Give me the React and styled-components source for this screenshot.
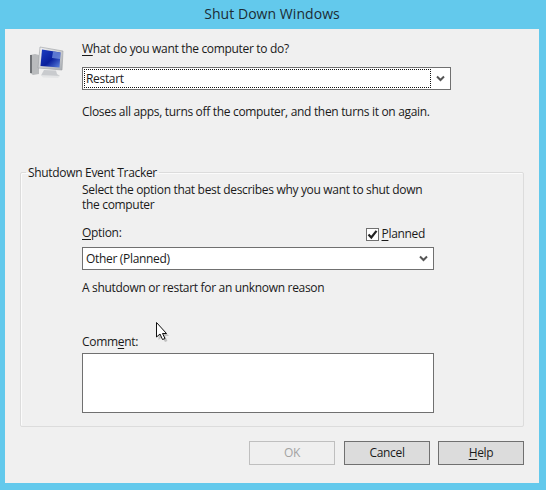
import React from 'react';
import styled, { createGlobalStyle } from 'styled-components';

const GlobalStyle = createGlobalStyle`
  html, body {
    margin: 0;
    padding: 0;
    background: #63c9ec;
  }
  * {
    box-sizing: border-box;
  }
`;

const Window = styled.div`
  position: relative;
  display: flex;
  flex-direction: column;
  width: 546px;
  height: 490px;
  padding: 0 7px 7px 5px;
  background: #63c9ec;
  color: #1a1a1a;
  font-family: "Open Sans", "Noto Sans", sans-serif;
  font-size: 12px;
  letter-spacing: -0.32px;
  line-height: 15px;
  overflow: hidden;
`;

const TitleBar = styled.div`
  height: 29px;
  text-align: center;
  font-size: 14px;
  letter-spacing: 0.05px;
  line-height: 27px;
  color: #1c2c34;
`;

const Panel = styled.div`
  flex: 1;
  display: flex;
  flex-direction: column;
  background: #f0f0f0;
  padding: 12px 15px 0 15px;
`;

const TopSection = styled.div`
  display: flex;
`;

const IconSlot = styled.div`
  width: 62px;
  flex: none;
  padding: 5px 0 0 9px;
`;

const TopFields = styled.div`
  display: flex;
  flex-direction: column;
  width: 369px;
`;

const Text = styled.div`
  margin-top: ${p => p.$top || 0}px;
  white-space: nowrap;
`;

const Key = styled.span`
  text-decoration: underline;
  text-underline-offset: 2px;
`;

const Combo = styled.div`
  display: flex;
  align-items: center;
  height: 23px;
  margin-top: ${p => p.$top || 0}px;
  padding: 1px;
  background: #fff;
  border: 1px solid #707070;
`;

const ComboValue = styled.div`
  flex: 1;
  height: 100%;
  padding-left: 1px;
  line-height: 17px;
  border: 1px dotted ${p => (p.$focused ? '#111' : 'transparent')};
`;

const ComboArrow = styled.div`
  display: flex;
  justify-content: center;
  width: 18px;
  flex: none;
`;

const GroupBox = styled.fieldset`
  margin: 46px 0 0 0;
  padding: 0 0 13px 0;
  border: 1px solid #dcdcdc;
  box-shadow: inset 1px 1px 0 #fbfbfb;
  border-radius: 2px;
  min-width: 0;
`;

const GroupTitle = styled.legend`
  margin-left: 5px;
  padding: 0 2px;
  line-height: 15px;
`;

const GroupFields = styled.div`
  display: flex;
  flex-direction: column;
  width: 352px;
  margin-left: 61px;
  padding-top: 2px;
`;

const OptionRow = styled.div`
  display: flex;
  justify-content: space-between;
  height: 15px;
  margin-top: 13px;
  padding-right: 9px;
`;

const CheckLabel = styled.label`
  display: flex;
  align-items: flex-start;
  gap: 3px;
`;

const CheckText = styled.span`
  padding-top: 1px;
`;

const CheckBox = styled.span`
  display: flex;
  align-items: center;
  justify-content: center;
  width: 13px;
  height: 13px;
  margin-top: 3px;
  background: #fff;
  border: 1px solid #707070;
`;

const CommentBox = styled.div`
  height: 60px;
  margin-top: 4px;
  background: #fff;
  border: 1px solid #707070;
`;

const ButtonRow = styled.div`
  display: flex;
  justify-content: flex-end;
  gap: 8px;
  margin-top: 14px;
`;

const Button = styled.div`
  width: 86px;
  height: 24px;
  line-height: 22px;
  text-align: center;
  background: ${p => (p.$disabled ? '#efefef' : '#dcdcdc')};
  border: 1px solid ${p => (p.$disabled ? '#bfbfbf' : '#707070')};
  color: ${p => (p.$disabled ? '#a3a3a3' : '#1a1a1a')};
  margin-right: ${p => (p.$disabled ? 1 : 0)}px;
`;

const Cursor = styled.svg`
  position: absolute;
  left: 155px;
  top: 321px;
`;

const Chevron = () => (
  <svg width="9" height="7" viewBox="0 0 9 7">
    <path d="M1 1.5 L4.5 5 L8 1.5" fill="none" stroke="#555" strokeWidth="2" />
  </svg>
);

const ComputerIcon = () => (
  <svg width="35" height="33" viewBox="0 0 35 33">
    <defs>
      <linearGradient id="screen" x1="0" y1="0" x2="1" y2="1">
        <stop offset="0" stopColor="#1c3fc4" />
        <stop offset="0.55" stopColor="#0a1f9c" />
        <stop offset="1" stopColor="#5f86e0" />
      </linearGradient>
      <linearGradient id="frame" x1="0" y1="0" x2="1" y2="1">
        <stop offset="0" stopColor="#f4f4f4" />
        <stop offset="1" stopColor="#a9adb3" />
      </linearGradient>
    </defs>
    <path d="M1 9 L6 8 L10 9 L10 28 L4 29 L1 27 Z" fill="#b9bbbd" />
    <path d="M1 9 L3 9 L3 27 L1 27 Z" fill="#6f7276" />
    <path d="M11 1 L34 5 L33 24 L9 22 Z" fill="url(#frame)" stroke="#9a9da1" strokeWidth="0.6" />
    <path d="M13 3.5 L31.5 6.5 L30.5 21.5 L11.5 20 Z" fill="url(#screen)" />
    <path d="M24 5.5 L31.5 6.5 L31 13 L23 12 Z" fill="#7d9be6" opacity="0.7" />
    <path d="M15 24 L27 24.5 L28 28 L31 30 L12 29.5 Z" fill="#c9cbce" />
    <path d="M12 29.5 L31 30 L29 32 L14 31.5 Z" fill="#e4e5e6" />
  </svg>
);

const Check = () => (
  <svg width="11" height="11" viewBox="0 0 11 11">
    <path d="M1.5 5.5 L4.3 8.5 L9.5 1.8" fill="none" stroke="#222" strokeWidth="2.2" />
  </svg>
);

const Arrow = () => (
  <Cursor width="16" height="22" viewBox="0 0 16 22">
    <path d="M3.5 4 L3.5 19 L7 16 L10 21 L12.5 20 L10 15 L14 15 Z" fill="#888" opacity="0.45" />
    <path d="M1.5 1.5 L1.5 16 L5 13 L7.5 18.5 L10 17.5 L7.5 12.5 L11.5 12.5 Z" fill="#fff" stroke="#111" strokeWidth="1" />
  </Cursor>
);

export default function App() {
  return (
    <Window>
      <GlobalStyle />
      <TitleBar>Shut Down Windows</TitleBar>
      <Panel>
        <TopSection>
          <IconSlot>
            <ComputerIcon />
          </IconSlot>
          <TopFields>
            <Text>
              <Key>W</Key>hat do you want the computer to do?
            </Text>
            <Combo $top={11}>
              <ComboValue $focused>Restart</ComboValue>
              <ComboArrow>
                <Chevron />
              </ComboArrow>
            </Combo>
            <Text $top={14}>Closes all apps, turns off the computer, and then turns it on again.</Text>
          </TopFields>
        </TopSection>
        <GroupBox>
          <GroupTitle>Shutdown Event Tracker</GroupTitle>
          <GroupFields>
            <Text>Select the option that best describes why you want to shut down</Text>
            <Text>the computer</Text>
            <OptionRow>
              <Text>
                <Key>O</Key>ption:
              </Text>
              <CheckLabel>
                <CheckBox>
                  <Check />
                </CheckBox>
                <CheckText>
                  <Key>P</Key>lanned
                </CheckText>
              </CheckLabel>
            </OptionRow>
            <Combo $top={7}>
              <ComboValue>Other (Planned)</ComboValue>
              <ComboArrow>
                <Chevron />
              </ComboArrow>
            </Combo>
            <Text $top={10}>A shutdown or restart for an unknown reason</Text>
            <Text $top={39}>
              Comm<Key>e</Key>nt:
            </Text>
            <CommentBox />
          </GroupFields>
        </GroupBox>
        <ButtonRow>
          <Button $disabled>OK</Button>
          <Button>Cancel</Button>
          <Button>
            <Key>H</Key>elp
          </Button>
        </ButtonRow>
      </Panel>
      <Arrow />
    </Window>
  );
}
